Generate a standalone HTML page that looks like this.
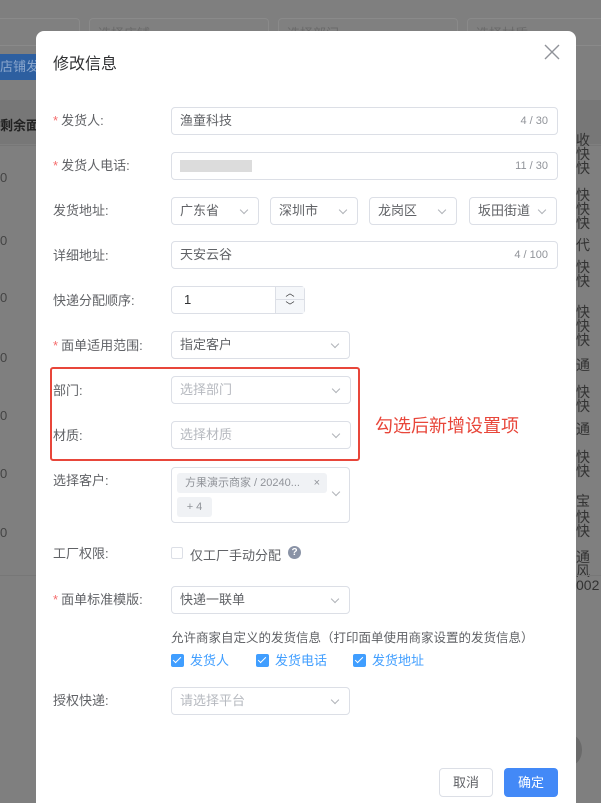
<!DOCTYPE html>
<html><head><meta charset="utf-8"><style>
*{box-sizing:border-box;margin:0;padding:0}
html,body{width:601px;height:803px;overflow:hidden}
body{background:#7f7f7f;font-family:"Liberation Sans","Noto Sans CJK SC",sans-serif;position:relative;font-size:13px;color:#606266}
.a{position:absolute}
.bgbox{position:absolute;border:1px solid #8a8a8a;border-radius:4px;background:#808080;color:#6a6a6a;font-size:13px;padding:4px 8px}
.modal{position:absolute;left:36px;top:31px;width:540px;height:772px;background:#fff;border-radius:8px 8px 0 0}
.lab{position:absolute;left:53px;color:#606266;font-size:13px;margin-top:-2px}
.req{color:#f56c6c;margin-right:3px}
.in{position:absolute;border:1px solid #dcdfe6;border-radius:4px;height:28px;background:#fff;padding:0 8px;line-height:26px;color:#606266;font-size:13px}
.cnt{position:absolute;right:9px;top:0;color:#909399;font-size:11px}
.arr{position:absolute;right:11px;top:9px;width:6px;height:6px;border-right:1px solid #b0b3b8;border-bottom:1px solid #b0b3b8;transform:rotate(45deg)}
.ph{color:#b6b9bf}
.cb{display:inline-block;width:13px;height:13px;background:#409eff;border-radius:2px;position:relative;vertical-align:-2px;margin-right:6px}
.cb:after{content:"";position:absolute;left:4px;top:1px;width:3px;height:7px;border-right:1.5px solid #fff;border-bottom:1.5px solid #fff;transform:rotate(45deg)}
.rt{position:absolute;left:576px;color:#333;font-size:14px;line-height:14px}
</style></head><body>
<div class="bgbox" style="left:-10px;top:18px;width:90px;height:28px"></div>
<div class="bgbox" style="left:89px;top:18px;width:180px;height:28px">选择店铺</div>
<div class="bgbox" style="left:278px;top:18px;width:180px;height:28px">选择部门</div>
<div class="bgbox" style="left:467px;top:18px;width:150px;height:28px">选择材质</div>
<div class="a" style="left:0;top:54px;width:40px;height:26px;background:#2d5fa0;color:#8aa6cc;line-height:26px">店铺发</div>
<div class="a" style="left:0;top:100px;width:601px;height:44px;background:#777"></div>
<div class="a" style="left:0;top:115px;color:#222;font-weight:bold">剩余面</div>
<div class="a" style="left:0;top:145px;width:601px;height:430px;border-top:1px solid #777"></div>
<div class="a" style="left:0;top:170px;color:#444">0</div>
<div class="a" style="left:0;top:233px;color:#444">0</div>
<div class="a" style="left:0;top:290px;color:#444">0</div>
<div class="a" style="left:0;top:350px;color:#444">0</div>
<div class="a" style="left:0;top:408px;color:#444">0</div>
<div class="a" style="left:0;top:466px;color:#444">0</div>
<div class="a" style="left:0;top:525px;color:#444">0</div>
<div class="rt" style="top:133px">收<br>快<br>快</div>
<div class="rt" style="top:188px">快<br>快<br>快</div>
<div class="rt" style="top:238px">代</div>
<div class="rt" style="top:260px">快<br>快</div>
<div class="rt" style="top:305px">快<br>快<br>快</div>
<div class="rt" style="top:358px">通</div>
<div class="rt" style="top:385px">快<br>快</div>
<div class="rt" style="top:422px">通</div>
<div class="rt" style="top:450px">快<br>快</div>
<div class="rt" style="top:494px">宝</div>
<div class="rt" style="top:510px">快<br>快</div>
<div class="rt" style="top:550px">通<br>风<br>002</div>
<div class="a" style="left:0;top:575px;width:601px;height:1px;background:#777"></div>
<div class="a" style="left:560px;top:735px;width:22px;height:30px;border-radius:50%;background:#6a6a6a"></div>

<div class="modal"></div>
<div class="a" style="left:53px;top:50px;font-size:16px;color:#303133">修改信息</div>
<svg class="a" style="left:544px;top:44px" width="16" height="16"><path d="M1 1L15 15M15 1L1 15" stroke="#909399" stroke-width="1.4"/></svg>

<div class="lab" style="top:112px"><span class="req">*</span>发货人:</div>
<div class="in" style="left:171px;top:107px;width:387px">渔童科技<span class="cnt">4 / 30</span></div>
<div class="lab" style="top:157px"><span class="req">*</span>发货人电话:</div>
<div class="in" style="left:171px;top:152px;width:387px"><span class="a" style="left:8px;top:7px;width:72px;height:12px;background:#dcdcdc"></span><span class="cnt">11 / 30</span></div>
<div class="lab" style="top:202px">发货地址:</div>
<div class="in" style="left:171px;top:197px;width:88px">广东省<i class="arr"></i></div>
<div class="in" style="left:270px;top:197px;width:88px">深圳市<i class="arr"></i></div>
<div class="in" style="left:369px;top:197px;width:88px">龙岗区<i class="arr"></i></div>
<div class="in" style="left:469px;top:197px;width:88px">坂田街道<i class="arr"></i></div>
<div class="lab" style="top:247px">详细地址:</div>
<div class="in" style="left:171px;top:241px;width:387px">天安云谷<span class="cnt">4 / 100</span></div>
<div class="lab" style="top:292px">快递分配顺序:</div>
<div class="in" style="left:171px;top:286px;width:134px;padding-left:12px;color:#303133">1
<div class="a" style="right:0;top:0;width:29px;height:26px;border-left:1px solid #dcdfe6;background:#f5f7fa"><div style="height:13px;border-bottom:1px solid #dcdfe6;text-align:center;font-size:9px;line-height:13px">︿</div><div style="text-align:center;font-size:9px;line-height:12px">﹀</div></div></div>
<div class="lab" style="top:337px"><span class="req">*</span>面单适用范围:</div>
<div class="in" style="left:171px;top:331px;width:179px">指定客户<i class="arr"></i></div>
<div class="a" style="left:50px;top:367px;width:310px;height:94px;border:2px solid #e8463a;border-radius:3px"></div>
<div class="lab" style="top:382px">部门:</div>
<div class="in" style="left:171px;top:376px;width:180px"><span class="ph">选择部门</span><i class="arr"></i></div>
<div class="lab" style="top:427px">材质:</div>
<div class="in" style="left:171px;top:421px;width:180px"><span class="ph">选择材质</span><i class="arr"></i></div>
<div class="a" style="left:375px;top:412px;color:#e8463a;font-size:18px">勾选后新增设置项</div>
<div class="lab" style="top:472px">选择客户:</div>
<div class="in" style="left:171px;top:467px;width:179px;height:56px;padding:0">
<div class="a" style="left:5px;top:5px;width:150px;height:20px;background:#f0f2f5;border-radius:3px;font-size:11px;line-height:20px;padding-left:8px;color:#909399">方果演示商家 / 20240...<span style="position:absolute;right:7px">×</span></div>
<div class="a" style="left:5px;top:29px;width:35px;height:20px;background:#f0f2f5;border-radius:3px;font-size:11px;line-height:20px;text-align:center;color:#909399">+ 4</div>
<i class="arr" style="top:21px;right:10px"></i></div>
<div class="lab" style="top:545px">工厂权限:</div>
<div class="a" style="left:171px;top:547px;width:12px;height:12px;border:1px solid #dcdfe6;border-radius:2px"></div>
<div class="a" style="left:190px;top:545px;color:#606266">仅工厂手动分配</div>
<div class="a" style="left:288px;top:546px;width:13px;height:13px;border-radius:50%;background:#8a93a6;color:#fff;font-size:10px;text-align:center;line-height:13px;font-weight:bold">?</div>
<div class="lab" style="top:591px"><span class="req">*</span>面单标准模版:</div>
<div class="in" style="left:171px;top:586px;width:179px">快递一联单<i class="arr"></i></div>
<div class="a" style="left:171px;top:627px;color:#606266;font-size:12.5px">允许商家自定义的发货信息（打印面单使用商家设置的发货信息）</div>
<div class="a" style="left:171px;top:650px;color:#409eff;font-size:13px"><span class="cb"></span>发货人</div>
<div class="a" style="left:256px;top:650px;color:#409eff;font-size:13px"><span class="cb"></span>发货电话</div>
<div class="a" style="left:353px;top:650px;color:#409eff;font-size:13px"><span class="cb"></span>发货地址</div>
<div class="lab" style="top:692px">授权快递:</div>
<div class="in" style="left:171px;top:687px;width:179px"><span class="ph">请选择平台</span><i class="arr"></i></div>
<div class="a" style="left:439px;top:768px;width:54px;height:29px;border:1px solid #dcdfe6;border-radius:4px;text-align:center;line-height:27px;color:#606266">取消</div>
<div class="a" style="left:504px;top:768px;width:54px;height:29px;background:#4389f7;border-radius:4px;text-align:center;line-height:29px;color:#fff">确定</div>
</body></html>
